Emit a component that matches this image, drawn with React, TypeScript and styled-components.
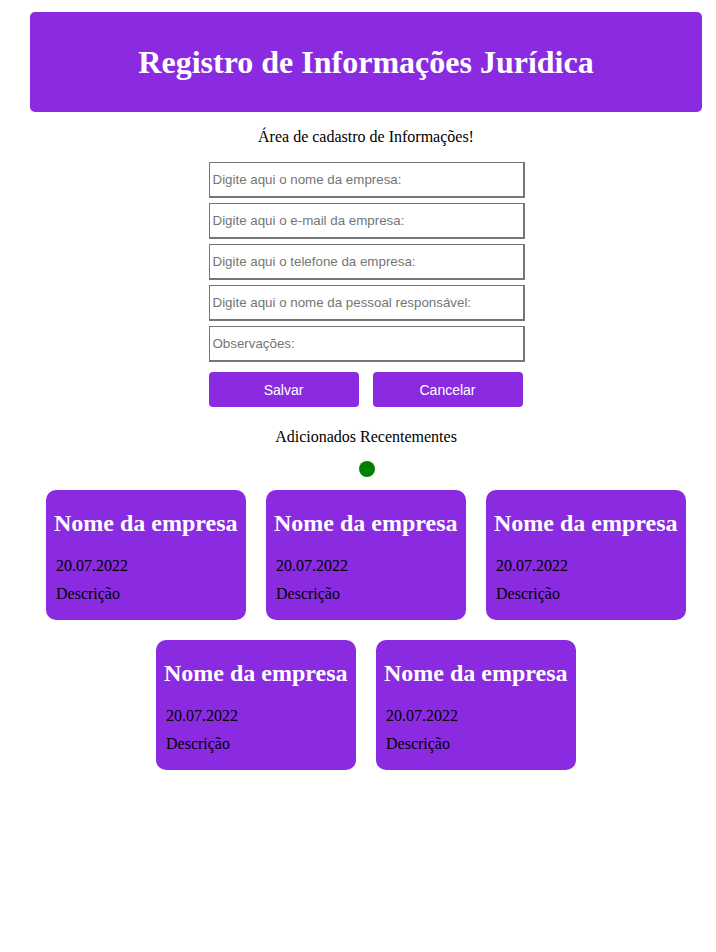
import React from 'react';
import styled, { createGlobalStyle } from 'styled-components';

const GlobalStyle = createGlobalStyle`
  body {
    margin: 0;
    background: #ffffff;
    font-family: "Liberation Serif", "Times New Roman", serif;
    color: #000000;
  }
`;

const Page = styled.div`
  width: 672px;
  margin: 0 0 0 30px;
  padding-top: 12px;
  display: flex;
  flex-direction: column;
  align-items: center;
`;

const Header = styled.header`
  width: 100%;
  height: 100px;
  background: #8a2be2;
  border-radius: 5px;
  display: flex;
  align-items: center;
  justify-content: center;
`;

const Title = styled.h1`
  margin: 1px 0 0;
  font-size: 32px;
  line-height: 37px;
  font-weight: bold;
  color: #ffffff;
`;

const Caption = styled.p<{ $top: number }>`
  margin: ${(p) => p.$top}px 0 0;
  font-size: 16px;
  line-height: 18px;
`;

const Form = styled.form`
  width: 316px;
  margin: 16px 0 0 1px;
  display: flex;
  flex-direction: column;
  gap: 5px;
`;

const Input = styled.input`
  box-sizing: border-box;
  width: 316px;
  height: 36px;
  padding: 0 3px;
  border-style: solid;
  border-color: #767676;
  border-width: 1px 2px 2px 1px;
  outline: none;
  font-family: "Liberation Sans", Arial, sans-serif;
  font-size: 13.33px;
  color: #000;
  &::placeholder {
    color: #757575;
  }
`;

const Buttons = styled.div`
  display: flex;
  gap: 14px;
  margin-top: 5px;
`;

const Button = styled.button`
  width: 150px;
  height: 35px;
  border: none;
  border-radius: 4px;
  background: #8a2be2;
  color: #ffffff;
  font-family: "Liberation Sans", Arial, sans-serif;
  font-size: 14px;
  cursor: pointer;
`;

const Dot = styled.div`
  width: 16px;
  height: 16px;
  margin: 15px 0 0 1px;
  border-radius: 50%;
  background: #008000;
`;

const Cards = styled.div`
  width: 100%;
  margin-top: 13px;
  display: flex;
  flex-wrap: wrap;
  justify-content: center;
  gap: 20px;
`;

const Card = styled.div`
  box-sizing: border-box;
  width: 200px;
  height: 130px;
  padding: 19px 9px 0 8px;
  background: #8a2be2;
  border-radius: 10px;
`;

const CardTitle = styled.h2`
  margin: 0 0 20px;
  font-size: 24px;
  line-height: 28px;
  font-weight: bold;
  color: #ffffff;
  white-space: nowrap;
`;

const CardText = styled.p`
  margin: 0 0 10px 2px;
  font-size: 16px;
  line-height: 18px;
`;

const placeholders = [
  'Digite aqui o nome da empresa:',
  'Digite aqui o e-mail da empresa:',
  'Digite aqui o telefone da empresa:',
  'Digite aqui o nome da pessoal responsável:',
  'Observações:',
];

const recent = [1, 2, 3, 4, 5].map((id) => ({
  id,
  name: 'Nome da empresa',
  date: '20.07.2022',
  description: 'Descrição',
}));

export default function App() {
  return (
    <>
      <GlobalStyle />
      <Page>
        <Header>
          <Title>Registro de Informações Jurídica</Title>
        </Header>
        <Caption $top={16}>Área de cadastro de Informações!</Caption>

        <Form onSubmit={(e) => e.preventDefault()}>
          {placeholders.map((ph) => (
            <Input key={ph} placeholder={ph} />
          ))}
          <Buttons>
            <Button type="submit">Salvar</Button>
            <Button type="button">Cancelar</Button>
          </Buttons>
        </Form>

        <Caption $top={21}>Adicionados Recentementes</Caption>
        <Dot />

        <Cards>
          {recent.map((item) => (
            <Card key={item.id}>
              <CardTitle>{item.name}</CardTitle>
              <CardText>{item.date}</CardText>
              <CardText>{item.description}</CardText>
            </Card>
          ))}
        </Cards>
      </Page>
    </>
  );
}
